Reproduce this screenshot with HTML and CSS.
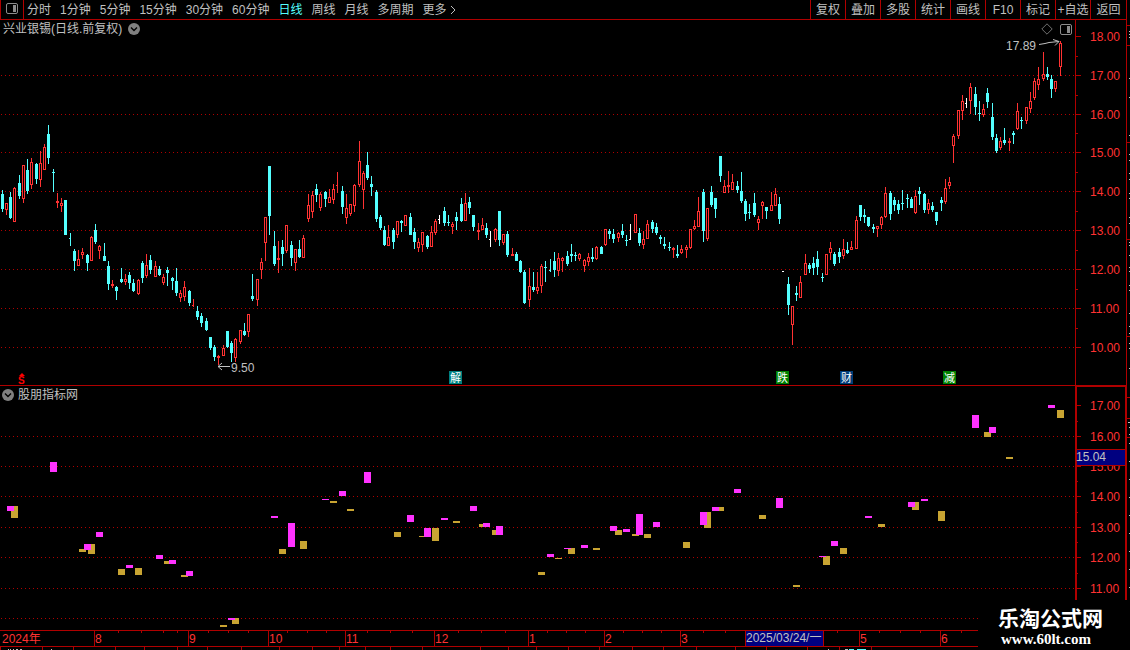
FILE: index.html
```html
<!DOCTYPE html>
<html lang="zh-CN">
<head>
<meta charset="utf-8">
<title>兴业银锡 日线</title>
<link rel="stylesheet" href="styles.css">
</head>
<body>
<div class="app">
  <header class="toolbar">
    <button class="panel-toggle" aria-label="侧栏">
      <svg width="12" height="11" viewBox="0 0 12 11"><rect x=".5" y=".5" width="11" height="10" rx="1.5" fill="none" stroke="#8c8c8c"/><rect x="7" y="2" width="3" height="7" fill="#8c8c8c"/></svg>
    </button>
    <nav class="periods">
      <button>分时</button><button>1分钟</button><button>5分钟</button><button>15分钟</button><button>30分钟</button><button>60分钟</button><button class="active">日线</button><button>周线</button><button>月线</button><button>多周期</button><button class="more">更多<svg width="6" height="10" viewBox="0 0 6 10"><path d="M1 1l4 4-4 4" fill="none" stroke="#c0c0c0"/></svg></button>
    </nav>
    <div class="tools">
      <button>复权</button><button>叠加</button><button>多股</button><button>统计</button><button>画线</button><button>F10</button><button>标记</button><button>+自选</button><button>返回</button>
    </div>
  </header>

  <main class="workspace">
    <div class="panes">
      <section class="pane price">
        <div class="plot">
          <svg class="canvas" id="price-plot" height="365"></svg>
          <div class="pane-title">
            <h1>兴业银锡(日线.前复权)</h1>
            <button class="drop" aria-label="展开"><svg width="12" height="12" viewBox="0 0 12 12"><circle cx="6" cy="6" r="6" fill="#808080"/><path d="M3 4.5l3 3 3-3" fill="none" stroke="#000" stroke-width="1.4"/></svg></button>
          </div>
          <div class="pane-tools">
            <svg width="12" height="12" viewBox="0 0 12 12"><path d="M6 .8L11.2 6 6 11.2.8 6z" fill="none" stroke="#707070"/></svg>
            <svg width="12" height="11" viewBox="0 0 12 11"><rect x=".5" y=".5" width="11" height="10" rx="1.5" fill="none" stroke="#8c8c8c"/><rect x="7" y="2" width="3" height="7" fill="#8c8c8c"/></svg>
          </div>
        </div>
        <svg class="axis" id="price-axis" height="365"></svg>
      </section>
      <section class="pane indicator">
        <div class="plot">
          <svg class="canvas" id="indicator-plot" height="244"></svg>
          <div class="pane-title">
            <button class="drop" aria-label="展开"><svg width="12" height="12" viewBox="0 0 12 12"><circle cx="6" cy="6" r="6" fill="#808080"/><path d="M3 4.5l3 3 3-3" fill="none" stroke="#000" stroke-width="1.4"/></svg></button>
            <h2>股朋指标网</h2>
          </div>
        </div>
        <svg class="axis" id="indicator-axis" height="244"></svg>
      </section>
    </div>
    <svg class="edge" id="edge" height="610"></svg>
  </main>

  <footer class="timeline">
    <svg class="canvas" id="time-axis" height="20"></svg>
  </footer>
  <div class="brand">
    <strong>乐淘公式网</strong>
    <span>www.60lt.com</span>
  </div>
</div>
<script src="chart.js"></script>
</body>
</html>
```
FILE: styles.css
```css
* { box-sizing: border-box; }

body {
  margin: 0;
  background: #000;
  color: #c0c0c0;
  font: 12px/18px "Liberation Sans", "Noto Sans CJK SC", sans-serif;
  overflow: hidden;
}

button {
  margin: 0;
  padding: 0;
  border: 0;
  background: none;
  color: inherit;
  font: inherit;
  white-space: nowrap;
  cursor: pointer;
}

svg { display: block; }

.app {
  position: relative;
  display: flex;
  flex-direction: column;
}

.toolbar {
  display: flex;
  height: 20px;
  margin-right: 3px;
  border-bottom: 1px solid #b00000;
  border-right: 1px solid #b00000;
}

.panel-toggle {
  display: grid;
  place-items: center;
  width: 24px;
  padding-bottom: 2px;
  border: solid #b00000;
  border-width: 0 1px;
}

.periods {
  display: flex;
  flex: 1;
  gap: 9px;
  padding-left: 3px;
}

.periods .active { color: #54ffff; }

.more {
  display: flex;
  align-items: center;
  gap: 3px;
}

.tools {
  display: flex;
}

.tools button {
  width: 35px;
  border-left: 1px solid #b00000;
}

.tools button:last-child { width: 36px; }

.workspace { display: flex; }

.panes { flex: 1; }

.pane { display: flex; }

.price { border-bottom: 1px solid #b00000; }

.plot {
  position: relative;
  flex: 1;
  min-width: 0;
  overflow: hidden;
}

.canvas {
  width: 100%;
  shape-rendering: crispEdges;
}

.axis {
  width: 52px;
  shape-rendering: crispEdges;
}

.edge {
  width: 3px;
  shape-rendering: crispEdges;
}

.pane-title {
  position: absolute;
  top: 0;
  left: 2px;
  display: flex;
  align-items: center;
  gap: 4px;
}

.price .pane-title {
  left: 3px;
  gap: 6px;
}

.pane-title h1,
.pane-title h2 {
  margin: 0;
  font-size: 12px;
  font-weight: 400;
}

.pane-tools {
  position: absolute;
  top: 3px;
  right: 3px;
  display: flex;
  align-items: center;
  gap: 7px;
}

.timeline { height: 20px; }

.arrow { shape-rendering: auto; }

text { font-size: 12px; }

.brand {
  position: absolute;
  right: 0;
  bottom: 0;
  display: flex;
  flex-direction: column;
  gap: 3px;
  width: 152px;
  height: 50px;
  padding: 7px 0 0 20px;
  background: #000;
  color: #fff;
}

.brand strong {
  font: 700 21px/20px "Noto Sans CJK SC", sans-serif;
}

.brand span {
  padding-left: 3px;
  font: 700 15px/18px "Liberation Serif", serif;
}
```
FILE: chart.js
```js
const LINE = "#b00000";
const LABEL = "#ff3232";
const COLORS = { r: "#ff3232", c: "#54ffff", w: "#ffffff" };

// One entry per trading day: colour, then high, body top, body bottom, low.
// An upper-case colour marks a flat day drawn with a left tick only.
const DAYS = `
c190,194,209,212 r203,203,210,215 c192,197,218,219 r187,188,222,222 c175,183,196,199
r165,165,199,203 c159,170,191,194 r158,162,185,189 c163,164,179,184 r151,163,180,187
r144,147,170,170 c125,134,158,164 c169,172,173,192 r193,201,203,208 r198,203,206,212
c200,200,235,235 C233,238,239,246 c249,251,261,271 r250,259,266,266 r248,252,255,259
c254,255,263,271 r236,237,261,261 c224,230,242,244 r245,246,251,259 c243,256,261,261
c261,266,284,290 r280,284,286,288 c286,287,291,300 c268,279,282,283 r274,279,282,285
c272,275,283,289 c279,283,291,292 r279,280,294,295 c261,263,278,283 r254,265,276,278
c255,260,270,274 r261,266,277,277 c266,269,275,276 r274,277,283,285 c267,270,273,286
c277,278,281,290 c268,281,293,296 r290,293,298,302 r281,287,297,301 c290,291,303,306
R299,305,306,307 c306,311,317,320 c313,316,323,327 c318,321,330,331 c337,337,348,350
c345,347,357,361 r355,356,358,365 r345,348,356,356 c331,331,347,348 c341,343,353,362
r338,339,358,362 r330,330,342,344 c323,331,335,336 r314,314,332,337 c274,296,299,301
r279,279,300,306 r258,262,270,279 r217,217,243,261 c166,166,216,235 c231,246,264,266
r241,258,260,273 c240,247,254,266 r225,225,251,253 c241,245,258,266 r249,249,263,271
c240,249,257,258 r235,238,258,258 r194,205,219,222 r191,195,212,218 c184,189,195,202
r192,194,208,211 c191,192,199,207 r189,197,203,203 r184,189,200,204 R172,185,186,193
c186,191,207,214 r194,208,218,224 r204,204,214,216 r184,185,206,212 r141,161,185,187
r171,173,190,209 c152,165,178,180 c176,184,187,196 c190,192,219,222 c215,217,228,230
c226,230,245,246 r225,237,246,246 c228,230,242,249 r221,221,235,238 c220,221,223,232
r215,215,226,226 c213,217,235,235 c228,232,242,249 r238,242,248,252 r232,232,245,252
c235,236,247,249 r226,232,247,247 r219,221,233,235 W215,219,220,224 c207,211,223,226
c215,222,223,226 r222,224,227,234 c212,217,221,230 c198,204,221,222 r193,203,221,221
c197,202,208,214 c215,215,227,231 r223,230,232,240 r218,225,230,230 c223,228,235,238
W231,239,240,247 r228,229,240,242 c211,211,240,246 r234,234,243,245 c231,234,255,257
r248,254,256,256 c252,254,261,261 c260,261,272,273 c270,272,303,304 r268,286,300,307
c272,287,290,292 r272,287,291,294 r264,266,286,293 c261,267,268,282 C259,270,271,272
c252,261,270,277 r253,258,271,276 r257,258,261,272 c251,256,264,266 c244,254,256,262
c252,255,256,261 r253,254,259,261 r259,260,266,272 r253,257,262,266 c248,257,259,262
r246,247,259,260 c246,247,254,254 r229,229,245,246 c229,231,234,239 c229,234,239,243
r232,233,238,242 c224,231,235,238 c235,240,241,246 W224,239,240,240 r214,214,233,233
c228,233,243,246 r231,239,245,249 r220,224,239,239 c220,222,229,233 c223,227,233,235
c235,237,239,244 c237,244,246,249 c242,247,248,251 r247,248,250,258 c245,254,256,258
r245,249,253,254 r245,247,250,258 r229,229,248,249 r220,226,229,230 r197,211,227,227
c189,192,231,242 r208,208,239,241 c186,192,205,207 c198,198,209,218 c156,156,176,182
r180,186,193,193 r171,185,187,193 r174,182,190,190 c181,186,190,193 c172,191,201,203
c199,201,214,221 c204,212,213,219 c193,203,215,217 r216,219,223,230 r201,202,206,219
c207,207,211,219 r192,205,211,211 r188,194,206,206 c197,204,219,224 W271,271,272,272
c277,284,305,315 r306,306,325,345 c286,293,295,301 r276,282,298,298 r254,263,275,275
c263,265,269,273 c257,263,268,275 c251,259,267,275 c273,277,278,282 r254,254,275,275
r242,248,253,260 c252,254,264,266 c248,252,257,263 r239,249,256,259 c242,250,253,254
r241,247,250,250 r216,220,249,249 c205,205,217,221 c209,215,217,223 c217,217,226,227
c224,227,229,233 r226,226,229,237 r216,217,225,229 r187,193,217,218 c191,193,214,220
c197,200,205,211 c200,204,210,214 c190,203,204,210 c194,198,199,208 c197,199,208,208
r190,196,213,214 c187,191,194,205 c193,194,210,213 r199,203,210,214 c202,206,210,212
c212,212,221,225 c197,200,203,211 r179,188,202,204 r177,182,186,189 r134,136,146,163
r110,110,136,139 r95,101,111,120 W98,103,104,108 r83,87,101,114 c87,94,107,115
c101,113,114,121 r104,109,115,117 c88,93,102,108 c103,117,137,140 c134,138,151,153
r137,141,148,150 c128,140,143,145 r138,141,143,151 c131,133,135,144 r103,111,129,130
c117,120,121,129 r107,107,121,124 r92,101,109,113 r78,81,98,100 r67,79,85,90
r52,74,79,81 c67,74,77,80 c75,79,89,98 r81,81,89,92 r41,43,67,76
`.trim().split(/\s+/);

// Signal blocks: colour (m magenta, y gold), left, top, bottom.
const SIGNALS = `
y11,506,518 m7,506,511 m50,462,472 y79,549,552 y88,544,554 m84,544,550 m96,532,537
y118,569,575 m126,565,568 y135,568,575 m156,555,559 y164,561,564 m169,560,564
y181,575,577 m186,571,576 y220,625,627 y232,618,624 m228,618,620 m271,516,518
y279,549,554 m288,523,547 y300,541,549 m322,499,500 y330,501,503 m339,491,496
y347,509,511 m364,472,483 y394,532,537 m407,515,522 y419,536,537 m424,528,537
y432,528,541 m441,518,520 y453,521,523 m470,506,511 y479,524,527 m483,523,527
y492,530,535 m496,526,535 y538,572,575 m547,554,557 y555,558,559 y568,548,554
m564,548,549 m581,545,548 y593,548,550 y615,530,535 m610,526,531 m623,529,532
y632,534,536 m636,514,535 y644,534,538 m653,522,527 y683,542,548 y704,512,528
m700,512,525 y717,507,511 m712,507,511 m734,489,493 y759,515,519 m776,498,508
y793,585,587 y823,556,565 m819,556,557 m831,541,546 y840,548,554 m865,516,518
y878,524,527 y912,502,510 m908,502,507 m921,499,501 y938,511,521 m972,415,428
y984,432,437 m989,427,433 y1006,457,459 m1048,405,408 y1057,410,418
`.trim().split(/\s+/);

const rect = (x, y, w, h, fill) => `<rect x="${x}" y="${y}" width="${w}" height="${h}" fill="${fill}"/>`;
const text = (x, y, s, fill = LABEL, extra = "") => `<text x="${x}" y="${y}" fill="${fill}" ${extra}>${s}</text>`;
const gridline = y => `<line x1="1" x2="100%" y1="${y}.5" y2="${y}.5" stroke="${LINE}" stroke-dasharray="1 3"/>`;

function draw(id, top, body) {
  document.getElementById(id).innerHTML = `<g transform="translate(0 ${-top})">${body}</g>`;
}

function candle(row, i) {
  const fill = COLORS[row[0].toLowerCase()];
  const half = row[0] < "a";
  const [high, top, bottom, low] = row.slice(1).split(",").map(Number);
  const x = Math.floor(2.0125 + i * 4.2499);
  let out = rect(x - 1, top, half ? 2 : 3, bottom - top, fill);
  if (top > high) out += rect(x, high, 1, top - high, fill);
  if (low > bottom) out += rect(x, bottom, 1, low - bottom, fill);
  if (row[0] === "r" && bottom - top > 2) out += rect(x, top + 1, 1, bottom - top - 2, "#000");
  return out;
}

function badge(x, label, fill) {
  return rect(x, 371, 13, 13, fill) + text(x + 1, 382, label, "#fff", 'style="font-size:11px"');
}

draw("price-plot", 20,
  [75, 114, 152, 191, 230, 269, 308, 347].map(gridline).join("") +
  DAYS.map(candle).join("") +
  text(1006, 50, "17.89", "#c0c0c0") +
  '<path class="arrow" d="M1039 44.5l6-1 4-1 10-1M1053 39.5l6 2-4 4" fill="none" stroke="#c0c0c0"/>' +
  text(231, 372, "9.50", "#c0c0c0") +
  '<path class="arrow" d="M230 366.5h-12M222 363l-4 3.5 4 3.5" fill="none" stroke="#c0c0c0"/>' +
  badge(449, "解", "#008080") + badge(776, "跌", "#008000") +
  badge(840, "财", "#003c78") + badge(943, "减", "#008000") +
  '<path class="arrow" d="M19 376l3-3 3 3z" fill="#f00"/>' +
  text(18, 384, "S", "#f00", 'font-weight="700" style="font-size:10px"'));

draw("price-axis", 20,
  rect(0, 20, 1, 365, LINE) + rect(51, 20, 1, 365, LINE) +
  [36, 75, 114, 152, 191, 230, 269, 308, 347].map((y, i) =>
    rect(1, y, 5, 1, LINE) + text(15, y + 5, `${18 - i}.00`)).join("") +
  [56, 95, 133, 172, 211, 250, 289, 328].map(y => rect(1, y, 2, 1, LINE)).join(""));

draw("indicator-plot", 386,
  [436, 466, 496, 527, 557, 588, 618].map(gridline).join("") +
  SIGNALS.map(row => {
    const [x, top, bottom] = row.slice(1).split(",").map(Number);
    return rect(x, top, 7, bottom - top, row[0] === "m" ? "#ff32ff" : "#c8a432");
  }).join(""));

draw("indicator-axis", 386,
  rect(0, 386, 52, 1, LINE) + rect(0, 386, 2, 244, LINE) + rect(50, 386, 2, 244, LINE) +
  [405, 436, 466, 496, 527, 557, 588].map((y, i) =>
    rect(2, y, 4, 1, LINE) + text(15, y + 5, `${17 - i}.00`)).join("") +
  [421, 481, 512, 542, 573].map(y => rect(2, y, 1, 1, LINE)).join("") +
  rect(2, 449, 48, 17, LINE) + rect(2, 450, 48, 15, "#000080") +
  text(1, 461, "15.04", "#c0c0c0"));

draw("edge", 20,
  [25, 45, 142, 239, 336, 397, 418, 437].map(y => rect(0, y, 3, 1, LINE)).join("") +
  [31, 34, 37, 78, 97, 135, 154, 160, 173, 179, 193, 198, 217, 223, 242, 245, 255, 267, 271, 285,
   290, 313, 326, 333, 343, 348, 368, 427, 434, 443, 461, 479, 497, 515, 533, 551, 569, 587]
    .map(y => rect(2, y, 1, 1, "#c0c0c0")).join("") + rect(1, 422, 2, 1, "#c0c0c0"));

const MONTHS = [[94, "8"], [188, "9"], [268, "10"], [345, "11"], [434, "12"], [528, "1"],
  [604, "2"], [680, "3"], [859, "5"], [940, "6"]];
draw("time-axis", 630,
  `<rect y="630" width="100%" height="1" fill="${LINE}"/><rect y="646" width="100%" height="1" fill="${LINE}"/>` +
  text(2, 643, "2024年") +
  MONTHS.map(([x, m]) => rect(x, 631, 1, 15, LINE) + text(x + 1, 643, m)).join("") +
  [118, 141, 163, 177, 208, 228, 248, 287, 307, 326, 367, 390, 412, 458, 481, 505, 547, 566, 585,
   623, 642, 661, 703, 725, 837, 879, 900, 920, 961].map(x => rect(x, 631, 1, 2, LINE)).join("") +
  rect(745, 631, 79, 15, LINE) + rect(746, 631, 77, 15, "#000080") +
  text(746, 642, "2025/03/24/一", "#c0c0c0") +
  [0, 42, 73, 115, 144, 177, 207, 241, 279, 312, 339, 365, 390, 422, 480, 508, 536, 568, 599, 632,
   663, 696, 735, 766, 807, 839, 871].map(x => rect(x, 647, 1, 3, LINE)).join("") +
  [[8, 1], [10, 1], [13, 1], [16, 2], [20, 2], [51, 1], [828, 1], [845, 3]]
    .map(([x, w]) => rect(x, 649, w, 1, "#c0c0c0")).join("") +
  rect(849, 649, 5, 1, "#54ffff") + rect(857, 649, 9, 1, "#54ffff"));
```
